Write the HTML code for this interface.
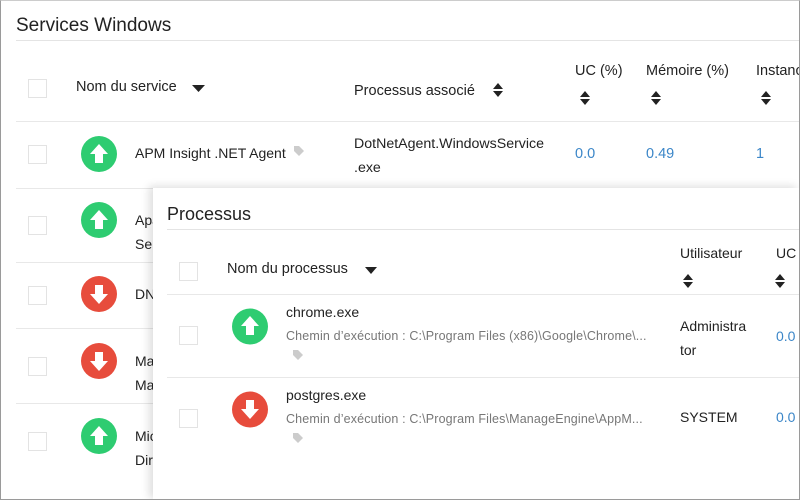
<!DOCTYPE html><html><head><meta charset="utf-8"><style>
*{margin:0;padding:0;box-sizing:border-box}
html,body{width:800px;height:500px;overflow:hidden}
body{background:#fff;font-family:"Liberation Sans",sans-serif;color:#222;position:relative}
.a{position:absolute;white-space:nowrap}
.frame{position:absolute;left:0;top:0;width:800px;height:500px;border:1px solid #9a9a9a;border-top-color:#ccc;pointer-events:none;z-index:10}
.cb{position:absolute;width:19px;height:19px;border:1.5px solid #e3e3e3;background:#fff}
.ln{position:absolute;height:1px;background:#e8e8e8}
.t{font-size:14.5px}
.blue{color:#3b86c8}
svg{display:block}
</style></head><body>
<div class="a" style="left:16px;top:15px;font-size:19px">Services Windows</div>
<div class="ln" style="left:16px;top:40px;width:784px;background:#e4e4e4"></div>
<div class="cb" style="left:28px;top:79px"></div>
<div class="a t" style="left:76px;top:79px">Nom du service</div>
<svg class="a" style="left:192px;top:85px" width="13" height="8"><path d="M0 0H13L6.5 7Z" fill="#222"/></svg>
<div class="a t" style="left:354px;top:83px">Processus associé</div>
<svg class="a" style="left:493px;top:83px" width="10" height="14"><path d="M0 6H10L5 0Z M0 8H10L5 14Z" fill="#222"/></svg>
<div class="a t" style="left:575px;top:63px">UC (%)</div>
<svg class="a" style="left:580px;top:91px" width="10" height="14"><path d="M0 6H10L5 0Z M0 8H10L5 14Z" fill="#222"/></svg>
<div class="a t" style="left:646px;top:63px">Mémoire (%)</div>
<svg class="a" style="left:651px;top:91px" width="10" height="14"><path d="M0 6H10L5 0Z M0 8H10L5 14Z" fill="#222"/></svg>
<div class="a t" style="left:756px;top:63px">Instances</div>
<svg class="a" style="left:761px;top:91px" width="10" height="14"><path d="M0 6H10L5 0Z M0 8H10L5 14Z" fill="#222"/></svg>
<div class="ln" style="left:16px;top:121px;width:784px"></div>

<div class="cb" style="left:28px;top:145px"></div>
<svg class="a" style="left:81px;top:136px" width="36" height="36"><circle cx="18" cy="18" r="18" fill="#2ecc71"/><path d="M18 8L27 18H22V27H14V18H9Z" fill="#fff"/></svg>
<div class="a" style="left:135px;top:145px;font-size:14px">APM Insight .NET Agent</div>
<svg class="a" style="left:293px;top:145px" width="12" height="12"><path d="M1 1H6L11 6L6 11L1 6Z" fill="#ccc"/></svg>
<div class="a" style="left:354px;top:132px;font-size:14.2px;line-height:24px">DotNetAgent.WindowsService<br>.exe</div>
<div class="a t blue" style="left:575px;top:146px">0.0</div>
<div class="a t blue" style="left:646px;top:146px">0.49</div>
<div class="a t blue" style="left:756px;top:146px">1</div>
<div class="ln" style="left:16px;top:188px;width:784px"></div>

<div class="cb" style="left:28px;top:216px"></div>
<svg class="a" style="left:81px;top:202px" width="36" height="36"><circle cx="18" cy="18" r="18" fill="#2ecc71"/><path d="M18 8L27 18H22V27H14V18H9Z" fill="#fff"/></svg>
<div class="a" style="left:135px;top:208px;font-size:14px;line-height:24px">Apache<br>Service</div>
<div class="ln" style="left:16px;top:262px;width:784px"></div>

<div class="cb" style="left:28px;top:286px"></div>
<svg class="a" style="left:81px;top:276px" width="36" height="36"><circle cx="18" cy="18" r="18" fill="#e74c3c"/><path d="M18 28L27 18H22V9H14V18H9Z" fill="#fff"/></svg>
<div class="a" style="left:135px;top:286px;font-size:14px">DNS</div>
<div class="ln" style="left:16px;top:328px;width:784px"></div>

<div class="cb" style="left:28px;top:357px"></div>
<svg class="a" style="left:81px;top:343px" width="36" height="36"><circle cx="18" cy="18" r="18" fill="#e74c3c"/><path d="M18 28L27 18H22V9H14V18H9Z" fill="#fff"/></svg>
<div class="a" style="left:135px;top:349px;font-size:14px;line-height:24px">Ma<br>Ma</div>
<div class="ln" style="left:16px;top:403px;width:784px"></div>

<div class="cb" style="left:28px;top:432px"></div>
<svg class="a" style="left:81px;top:418px" width="36" height="36"><circle cx="18" cy="18" r="18" fill="#2ecc71"/><path d="M18 8L27 18H22V27H14V18H9Z" fill="#fff"/></svg>
<div class="a" style="left:135px;top:424px;font-size:14px;line-height:24px">Mic<br>Dir</div>

<div style="position:absolute;left:153px;top:188px;width:647px;height:312px;background:#fff;box-shadow:-4px -2px 8px rgba(0,0,0,0.13);z-index:5;overflow:hidden">
<div class="a" style="left:14px;top:16px;font-size:18px">Processus</div>
<div class="ln" style="left:14px;top:41px;width:650px;background:#e4e4e4"></div>
<div class="cb" style="left:26px;top:74px"></div>
<div class="a t" style="left:74px;top:73px">Nom du processus</div>
<svg class="a" style="left:212px;top:79px" width="12" height="8"><path d="M0 0H12L6 7Z" fill="#222"/></svg>
<div class="a" style="left:527px;top:57px;font-size:14px">Utilisateur</div>
<svg class="a" style="left:530px;top:86px" width="10" height="14"><path d="M0 6H10L5 0Z M0 8H10L5 14Z" fill="#222"/></svg>
<div class="a" style="left:623px;top:57px;font-size:14px">UC</div>
<svg class="a" style="left:622px;top:86px" width="10" height="14"><path d="M0 6H10L5 0Z M0 8H10L5 14Z" fill="#222"/></svg>
<div class="ln" style="left:14px;top:106px;width:650px"></div>

<div class="cb" style="left:26px;top:138px"></div>
<svg class="a" style="left:79px;top:120px" width="36" height="37"><circle cx="18" cy="18.5" r="18" fill="#2ecc71"/><path d="M18 8L27 18H22V27H14V18H9Z" fill="#fff"/></svg>
<div class="a" style="left:133px;top:116px;font-size:14px">chrome.exe</div>
<div class="a" style="left:133px;top:141px;font-size:12.5px;color:#777;letter-spacing:0.15px">Chemin d’exécution : C:\Program Files (x86)\Google\Chrome\...</div>
<svg class="a" style="left:139px;top:161px" width="12" height="12"><path d="M1 1H6L11 6L6 11L1 6Z" fill="#ccc"/></svg>
<div class="a" style="left:527px;top:126px;font-size:14px;line-height:24px">Administra<br>tor</div>
<div class="a blue" style="left:623px;top:140px;font-size:14px">0.0</div>
<div class="ln" style="left:14px;top:189px;width:650px"></div>

<div class="cb" style="left:26px;top:221px"></div>
<svg class="a" style="left:79px;top:203px" width="36" height="37"><circle cx="18" cy="18.5" r="18" fill="#e74c3c"/><path d="M18 28L27 18H22V9H14V18H9Z" fill="#fff"/></svg>
<div class="a" style="left:133px;top:199px;font-size:14px">postgres.exe</div>
<div class="a" style="left:133px;top:224px;font-size:12.5px;color:#777;letter-spacing:0.15px">Chemin d’exécution : C:\Program Files\ManageEngine\AppM...</div>
<svg class="a" style="left:139px;top:244px" width="12" height="12"><path d="M1 1H6L11 6L6 11L1 6Z" fill="#ccc"/></svg>
<div class="a" style="left:527px;top:221px;font-size:14px">SYSTEM</div>
<div class="a blue" style="left:623px;top:221px;font-size:14px">0.0</div>
</div>
<div class="frame"></div>
</body></html>
